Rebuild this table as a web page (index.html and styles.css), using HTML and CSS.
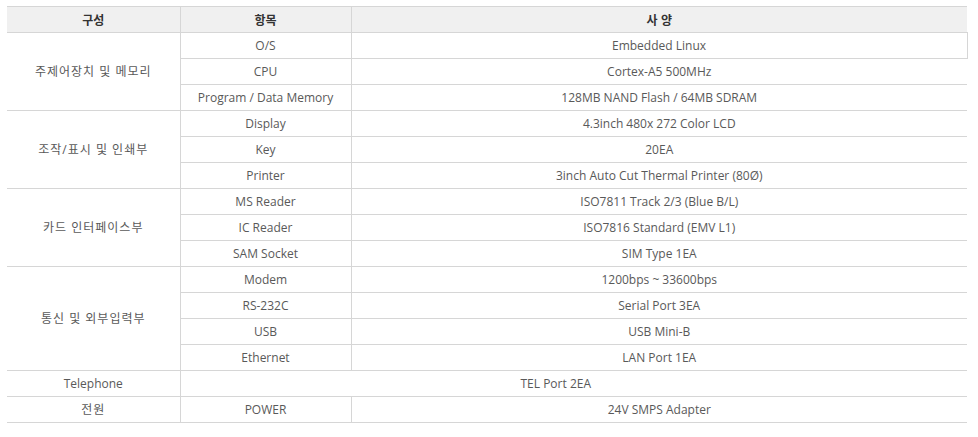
FILE: index.html
```html
<!DOCTYPE html>
<html lang="ko">
<head>
<meta charset="utf-8">
<link rel="stylesheet" href="styles.css">
</head>
<body>
<table class="spec">
  <colgroup>
    <col class="c1"><col class="c2"><col class="c3">
  </colgroup>
  <thead>
    <tr><th>구성</th><th>항목</th><th>사 양</th></tr>
  </thead>
  <tbody>
    <tr><td rowspan="3" class="ko">주제어장치 및 메모리</td><td>O/S</td><td class="first">Embedded Linux</td></tr>
    <tr><td>CPU</td><td>Cortex-A5 500MHz</td></tr>
    <tr><td>Program / Data Memory</td><td>128MB NAND Flash / 64MB SDRAM</td></tr>
    <tr><td rowspan="3" class="ko">조작/표시 및 인쇄부</td><td>Display</td><td>4.3inch 480x 272 Color LCD</td></tr>
    <tr><td>Key</td><td>20EA</td></tr>
    <tr><td>Printer</td><td>3inch Auto Cut Thermal Printer (80Ø)</td></tr>
    <tr><td rowspan="3" class="ko">카드 인터페이스부</td><td>MS Reader</td><td>ISO7811 Track 2/3 (Blue B/L)</td></tr>
    <tr><td>IC Reader</td><td>ISO7816 Standard (EMV L1)</td></tr>
    <tr><td>SAM Socket</td><td>SIM Type 1EA</td></tr>
    <tr><td rowspan="4" class="ko">통신 및 외부입력부</td><td>Modem</td><td>1200bps ~ 33600bps</td></tr>
    <tr><td>RS-232C</td><td>Serial Port 3EA</td></tr>
    <tr><td>USB</td><td>USB Mini-B</td></tr>
    <tr><td>Ethernet</td><td>LAN Port 1EA</td></tr>
    <tr><td>Telephone</td><td colspan="2" class="tel">TEL Port 2EA</td></tr>
    <tr><td class="ko">전원</td><td>POWER</td><td>24V SMPS Adapter</td></tr>
  </tbody>
</table>
</body>
</html>
```
FILE: styles.css
```css
html, body {
  margin: 0;
  padding: 0;
  background: #ffffff;
}
body {
  padding: 6px 0 0 7px;
  font-family: "Open Sans", "Noto Sans CJK KR", sans-serif;
  font-size: 12px;
  color: #595959;
}
.spec {
  border-collapse: collapse;
  width: 960px;
  table-layout: fixed;
}
.c1 { width: 173px; }
.c2 { width: 171px; }
.c3 { width: 616px; }
.spec th,
.spec td {
  height: 24px;
  padding: 1px 0 0;
  text-align: center;
  vertical-align: middle;
  border-top: 1px solid #d6d6d6;
  border-bottom: 1px solid #d6d6d6;
  border-left: 1px solid #d6d6d6;
  line-height: 16px;
}
.spec th:first-child,
.spec tbody tr > td[rowspan],
.spec tbody tr:nth-last-child(-n+2) > td:first-child {
  border-left: none;
}
.spec th {
  background: #f0f0f0;
  color: #333333;
  font-weight: bold;
  font-family: "Noto Sans CJK KR", sans-serif;
}
.spec .ko {
  letter-spacing: 1px;
}
.spec .first {
  border-right: 1px solid #d6d6d6;
}
.spec .tel {
  padding-right: 36px;
}
```
